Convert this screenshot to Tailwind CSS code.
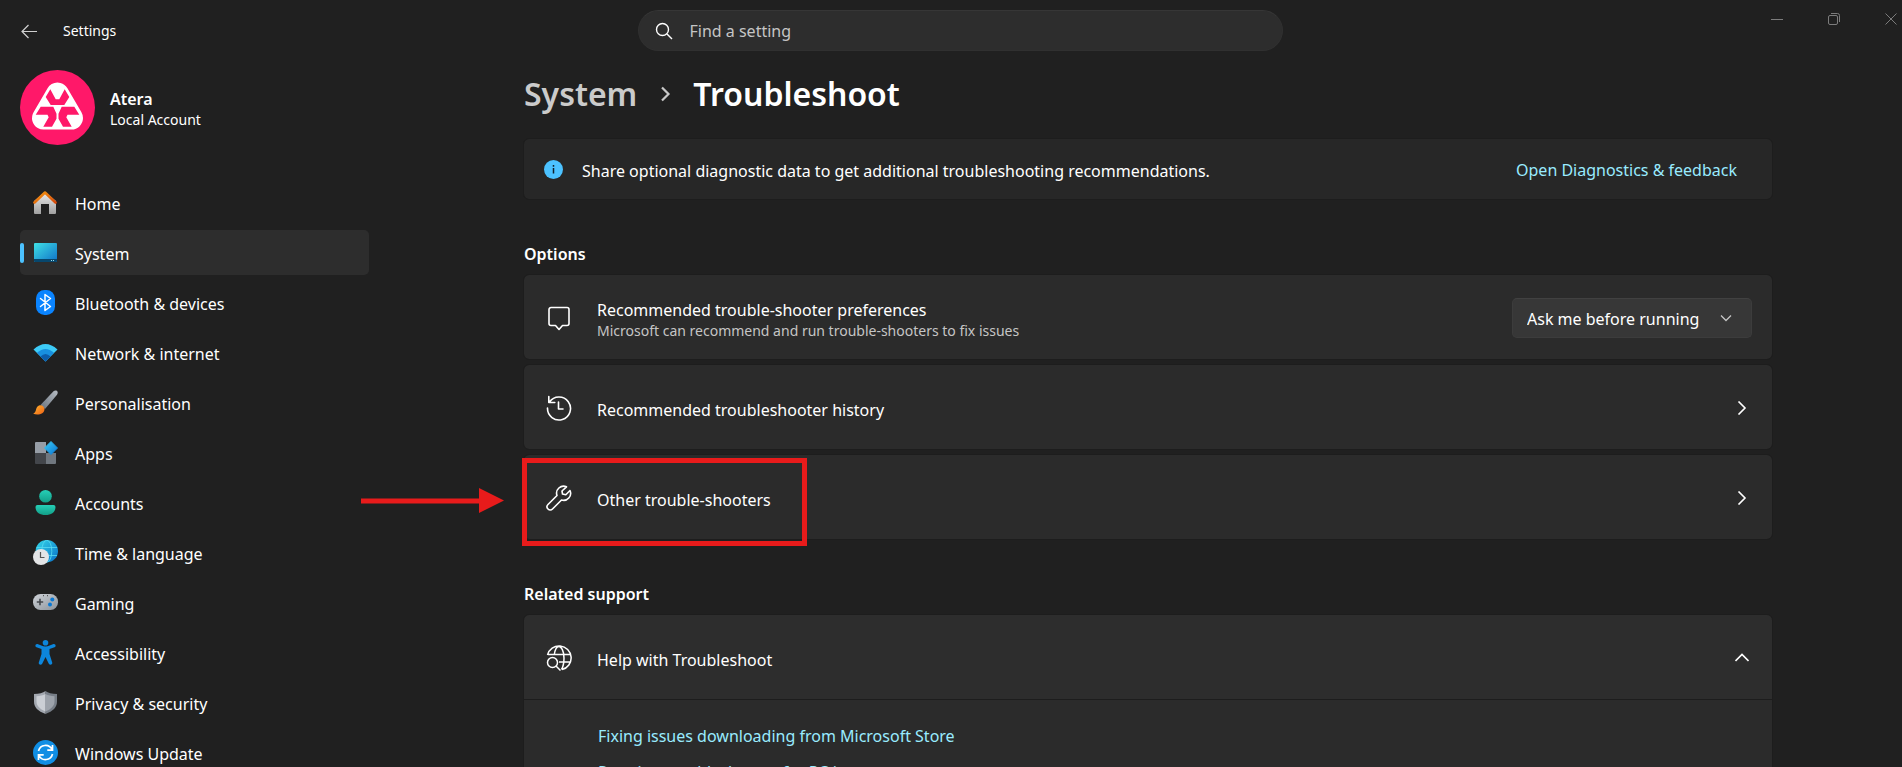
<!DOCTYPE html>
<html lang="en-GB">
<head>
<meta charset="utf-8">
<title>Settings</title>
<script src="https://cdn.jsdelivr.net/npm/@tailwindcss/browser@4"></script>
</head>
<body class="bg-[#202020] text-white font-['Noto_Sans',sans-serif] text-base leading-6">
<div class="h-screen overflow-hidden flex flex-col">

  <header class="h-15 shrink-0 flex items-start">
    <div class="flex-1 flex items-center h-15 gap-6 pl-[19px] pt-0.5">
      <button aria-label="Back" class="size-5">
        <svg viewBox="0 0 20 20" class="size-5" fill="none" stroke="#d0d0d0" stroke-width="1.2"><path d="M9.5 4 3 10.5 9.5 17M3 10.5h15"/></svg>
      </button>
      <h1 class="text-sm">Settings</h1>
    </div>
    <label class="mt-[10px] w-[645px] h-[41px] rounded-full bg-[#2d2d2d] border border-[#303030] border-t-[#363636] flex items-center gap-4 pl-[15px]">
      <svg viewBox="0 0 20 20" class="size-5" fill="none" stroke="#fff" stroke-width="1.4"><circle cx="8.5" cy="8.5" r="6"/><path d="m13 13 5 5"/></svg>
      <input type="text" aria-label="Find a setting" placeholder="Find a setting" class="flex-1 bg-transparent outline-none placeholder:text-[#c5c5c5]">
    </label>
    <div class="flex-1 flex justify-end items-center h-[38px] gap-[37px] pr-px">
      <button aria-label="Minimise" class="size-5"><svg viewBox="0 0 20 20" class="size-5" stroke="#7c7c7c" fill="none"><path d="M4 10.5h12"/></svg></button>
      <button aria-label="Restore" class="size-5"><svg viewBox="0 0 20 20" class="size-5" stroke="#7c7c7c" fill="none"><rect x="4.500" y="6.500" width="9" height="9" rx="1.500"/><path d="M7 4.500h6.500a2 2 0 0 1 2 2V13"/></svg></button>
      <button aria-label="Close" class="size-5"><svg viewBox="0 0 20 20" class="size-5" stroke="#7c7c7c" fill="none"><path d="m4.500 4.500 11 11m0-11-11 11"/></svg></button>
    </div>
  </header>

  <div class="flex-1 min-h-0 flex">
    <aside class="w-[394px] shrink-0 pl-5 pt-[10px]">
      <div class="flex items-center gap-[15px]">
        <svg viewBox="0 0 75 75" class="size-[75px]">
          <circle cx="37.500" cy="37.500" r="37.500" fill="#ff1869"/>
          <path d="M37.500 24 23.500 48h28Z" fill="#fff" stroke="#fff" stroke-width="23" stroke-linejoin="round"/>
          <g fill="#ff1869">
            <path d="m30.300 19.300 5.400 10h3.600l5.400-10 4.600 7.700-5 8H30.700l-5-8Z"/>
            <path d="M20.700 36.800h12.600l3.200 7v5l-4.500 8h-8.700l5.400-9.600-1.200-2.500H15.700Z"/>
            <path d="M54.300 36.800H41.700l-3.200 7v5l4.500 8h8.700l-5.400-9.600 1.200-2.500h11.800Z"/>
          </g>
        </svg>
        <div class="pt-0.5">
          <div class="font-semibold leading-[22px]">Atera</div>
          <div class="text-sm leading-5">Local Account</div>
        </div>
      </div>

      <nav class="mt-[35px] w-[349px] flex flex-col gap-[5px]">
        <a href="#" class="h-[45px] shrink-0 flex items-center gap-[17px] pl-[13px]">
          <svg viewBox="0 0 25 25" class="size-[25px]"><defs><linearGradient id="hw" x2="0" y2="1"><stop stop-color="#eee"/><stop offset="1" stop-color="#a0a0a0"/></linearGradient><linearGradient id="hr" x2="1" y2="1"><stop stop-color="#f59a12"/><stop offset="1" stop-color="#d64a0c"/></linearGradient></defs><path d="M1 11 12 2l11 9v12a1 1 0 0 1-1 1h-6V14H8v10H2a1 1 0 0 1-1-1Z" fill="url(#hw)"/><path d="M1.500 12.500 12 2.500l10.500 10" fill="none" stroke="url(#hr)" stroke-width="2.600" stroke-linecap="round" stroke-linejoin="round"/></svg>
          <span class="pt-0.5">Home</span></a>
        <a href="#" aria-current="page" class="relative h-[45px] shrink-0 flex items-center gap-[17px] pl-[13px] rounded-[5px] bg-[#2d2d2d]">
          <span class="absolute left-0 top-[13px] h-5 w-1 rounded-full bg-[#4cc2ff]"></span>
          <svg viewBox="0 0 25 25" class="size-[25px]"><defs><linearGradient id="sy" x2="1" y2="1"><stop stop-color="#3fe0e5"/><stop offset="1" stop-color="#0f71c8"/></linearGradient></defs><rect x="1" y="3" width="23" height="19" rx="1" fill="url(#sy)"/><path d="M1 19h23v2a1 1 0 0 1-1 1H2a1 1 0 0 1-1-1Z" fill="#07476d"/><path d="M18 20.500h1m1 0h1" stroke="#9de"/></svg>
          <span class="pt-0.5">System</span></a>
        <a href="#" class="h-[45px] shrink-0 flex items-center gap-[17px] pl-[13px]">
          <svg viewBox="0 0 25 25" class="size-[25px]"><rect x="3" width="19" height="25" rx="8.500" fill="#0a84ff"/><path d="m7.500 8.500 10 8-5.500 4v-16l5.500 4-10 8" fill="none" stroke="#fff" stroke-width="1.500" stroke-linejoin="round" stroke-linecap="round"/></svg>
          <span class="pt-0.5">Bluetooth &amp; devices</span></a>
        <a href="#" class="h-[45px] shrink-0 flex items-center gap-[17px] pl-[13px]">
          <svg viewBox="0 0 25 25" class="size-[25px]"><path d="M.5 9.500Q12.500-1.500 24.500 9.500L12.500 21.500Z" fill="#3dcbf7"/><path d="M4 12.800Q12.500 5 21 12.800L12.500 21.500Z" fill="#188fe0"/><path d="M7.500 16.500Q12.500 11.500 17.500 16.500L12.500 21.500Z" fill="#0c5cab"/></svg>
          <span class="pt-0.5">Network &amp; internet</span></a>
        <a href="#" class="h-[45px] shrink-0 flex items-center gap-[17px] pl-[13px]">
          <svg viewBox="0 0 25 25" class="size-[25px]"><defs><linearGradient id="pb" x1="1" x2="0" y2="1"><stop stop-color="#b6bcc3"/><stop offset="1" stop-color="#69737e"/></linearGradient><linearGradient id="po" x2="1" y2="1"><stop stop-color="#ffb52d"/><stop offset="1" stop-color="#ed6117"/></linearGradient></defs><path d="M7.500 15 20.500 1.200Q22-.2 24 .8 25.400 2.500 24 4.800L12 19Z" fill="url(#pb)"/><path d="M4.500 16.500C7.500 13.500 11.500 16 11.500 19c0 5.500-7 6.500-11.300 4.800C3.800 22 2.200 19 4.500 16.500Z" fill="url(#po)"/></svg>
          <span class="pt-0.5">Personalisation</span></a>
        <a href="#" class="h-[45px] shrink-0 flex items-center gap-[17px] pl-[13px]">
          <svg viewBox="0 0 25 25" class="size-[25px]"><defs><linearGradient id="ab" x2="1" y2="1"><stop stop-color="#3ccbf4"/><stop offset="1" stop-color="#0875d4"/></linearGradient></defs><path d="M3 2h10v11H2V3a1 1 0 0 1 1-1Z" fill="#969da6"/><path d="M2 13h11v11H3a1 1 0 0 1-1-1Z" fill="#43464b"/><path d="M13 13h10v10a1 1 0 0 1-1 1h-9Z" fill="#70777f"/><path d="m18 1.500 6.500 6.500-6.500 6.500L11.500 8Z" fill="url(#ab)" stroke="url(#ab)" stroke-linejoin="round"/></svg>
          <span class="pt-0.5">Apps</span></a>
        <a href="#" class="h-[45px] shrink-0 flex items-center gap-[17px] pl-[13px]">
          <svg viewBox="0 0 25 25" class="size-[25px]"><defs><linearGradient id="ac" x2="0" y2="1"><stop stop-color="#26cfb7"/><stop offset="1" stop-color="#129e87"/></linearGradient></defs><circle cx="12.500" cy="6.300" r="6.300" fill="url(#ac)"/><path d="M4.500 15h16a2 2 0 0 1 2 2c0 5-4 8-10 8s-10-3-10-8a2 2 0 0 1 2-2Z" fill="url(#ac)"/></svg>
          <span class="pt-0.5">Accounts</span></a>
        <a href="#" class="h-[45px] shrink-0 flex items-center gap-[17px] pl-[13px]">
          <svg viewBox="0 0 25 25" class="size-[25px]"><defs><linearGradient id="tl" x2="1" y2="1"><stop stop-color="#35d7e8"/><stop offset="1" stop-color="#0871c9"/></linearGradient></defs><circle cx="13.800" cy="11.200" r="11.200" fill="url(#tl)"/><g fill="none" stroke="#58dcf2" stroke-width=".8"><ellipse cx="13.800" cy="11.200" rx="5" ry="11"/><path d="M3.500 7.500h20.700M3 15.500h21"/></g><circle cx="8" cy="17" r="8" fill="#e3e4e6"/><path d="M7.500 12v5.500h4" fill="none" stroke="#555" stroke-width="1.200"/></svg>
          <span class="pt-0.5">Time &amp; language</span></a>
        <a href="#" class="h-[45px] shrink-0 flex items-center gap-[17px] pl-[13px]">
          <svg viewBox="0 0 25 25" class="size-[25px]"><defs><linearGradient id="gm" x2="1" y2="1"><stop stop-color="#cfd3d8"/><stop offset="1" stop-color="#8b929a"/></linearGradient></defs><rect y="4" width="25" height="16" rx="7.500" fill="url(#gm)"/><path d="M7 8.800v6.400M3.800 12h6.400" stroke="#44484d" stroke-width="1.600"/><circle cx="19.300" cy="9.500" r="2" fill="#0878d4"/><circle cx="17" cy="14.500" r="2" fill="#0878d4"/><path d="M10 5.700h1m3 0h1" stroke="#555" stroke-width="1.200"/></svg>
          <span class="pt-0.5">Gaming</span></a>
        <a href="#" class="h-[45px] shrink-0 flex items-center gap-[17px] pl-[13px]">
          <svg viewBox="0 0 25 25" class="size-[25px]"><g fill="#0c86dc"><circle cx="12.500" cy="2.800" r="2.800"/><path d="M4.500 4c2.500.8 5 2.400 8 2.400s5.500-1.600 8-2.400c2-.5 3 2.400 1 3.200L16.500 9v5l2.700 8.500c.6 2.200-2.400 3.200-3.400 1.200L12.500 17l-3.300 6.700c-1 2-4 1-3.400-1.200L8.500 14V9l-5-1.800C1.500 6.400 2.500 3.500 4.500 4Z"/></g></svg>
          <span class="pt-0.5">Accessibility</span></a>
        <a href="#" class="h-[45px] shrink-0 flex items-center gap-[17px] pl-[13px]">
          <svg viewBox="0 0 25 25" class="size-[25px]"><path d="M12.500 1C15 3 19 3.800 24 4v7.500c0 6-4 9.500-11.500 12.500Z" fill="#777e87"/><path d="M12.500 1C10 3 6 3.800 1 4v7.500c0 6 4 9.500 11.500 12.500Z" fill="#a3a8b0"/><path d="M12.500 4C10 5.500 7 6 3.500 6.300v5c0 4.700 3 7.500 9 10.200Z" fill="#cbcfd5"/><path d="M12.500 4c2.500 1.500 5.500 2 9 2.300v5c0 4.700-3 7.500-9 10.200Z" fill="#9da3ab"/></svg>
          <span class="pt-0.5">Privacy &amp; security</span></a>
        <a href="#" class="h-[45px] shrink-0 flex items-center gap-[17px] pl-[13px]">
          <svg viewBox="0 0 25 25" class="size-[25px]"><circle cx="12.500" cy="12.500" r="12.500" fill="#108ee4"/><g fill="none" stroke="#fff" stroke-width="1.700"><path d="M5.500 11A7.200 7.200 0 0 1 19 9.500M19.500 5v5.200h-5.200M19.500 14A7.200 7.200 0 0 1 6 15.500M5.500 20v-5.200h5.200"/></g></svg>
          <span class="pt-0.5">Windows Update</span></a>
      </nav>
    </aside>

    <main class="flex-1 min-w-0 pr-[130px] pl-[130px] pt-3">
      <h2 class="flex items-center text-[32px] leading-[44px] font-semibold">
        <a href="#" class="text-[#cbcbcb]">System</a>
        <svg viewBox="0 0 20 20" class="size-5 mx-[18px]" fill="none" stroke="#c8c8c8" stroke-width="2.200"><path d="m7 3.500 6.500 6.500L7 16.500"/></svg>
        <span>Troubleshoot</span>
      </h2>

      <section class="mt-[23px] h-[60px] flex items-center rounded-[5px] bg-[#272727] outline outline-[#1d1d1d] pl-5 pr-[35px]">
        <svg viewBox="0 0 19 19" class="size-[19px] mr-[19px]"><circle cx="9.500" cy="9.500" r="9.500" fill="#4cc2ff"/><path d="M9.500 5v1.800M9.500 8v5.500" stroke="#10202a" stroke-width="1.500"/></svg>
        <p class="pt-[3px]">Share optional diagnostic data to get additional troubleshooting recommendations.</p>
        <a href="#" class="ml-auto pt-px text-[#99ebff]">Open Diagnostics &amp; feedback</a>
      </section>

      <h3 class="mt-[43px] font-semibold">Options</h3>
      <div class="mt-[9px] flex flex-col gap-[6px]">
        <div class="h-[84px] flex items-center rounded-[5px] bg-[#2b2b2b] outline outline-[#1d1d1d] pt-0.5 pl-[22px] pr-5">
          <svg viewBox="0 0 26 26" class="size-[26px] mr-[25px]" fill="none" stroke="#fff" stroke-width="1.600" stroke-linejoin="round"><path d="M5 2.500h16a2 2 0 0 1 2 2v14a2 2 0 0 1-2 2h-4.500L13 24.500l-3.500-4H5a2 2 0 0 1-2-2v-14a2 2 0 0 1 2-2Z"/></svg>
          <div class="pt-1">
            <div id="pref" class="leading-[22px]">Recommended trouble-shooter preferences</div>
            <div class="text-sm leading-5 text-[#c5c5c5]">Microsoft can recommend and run trouble-shooters to fix issues</div>
          </div>
          <div class="relative ml-auto">
            <select aria-labelledby="pref" class="appearance-none w-60 h-10 rounded-[5px] bg-[#373737] border border-[#3c3c3c] border-t-[#414141] pt-0.5 pl-[14px]"><option>Ask me before running</option></select>
            <svg viewBox="0 0 12 12" class="absolute right-5 top-[14px] size-3 pointer-events-none" fill="none" stroke="#c5c5c5" stroke-width="1.300"><path d="m1 3.500 5 5 5-5"/></svg>
          </div>
        </div>
        <a href="#" class="h-[84px] flex items-center rounded-[5px] bg-[#2b2b2b] outline outline-[#1d1d1d] pt-0.5 pl-[22px] pr-[23px]">
          <svg viewBox="0 0 26 26" class="size-[26px] mr-[25px]" fill="none" stroke="#fff" stroke-width="1.600" stroke-linecap="round" stroke-linejoin="round"><path d="M3.500 7A11.500 11.500 0 1 1 1.500 13M2.800 1.500v6h6M12.500 7v7h4.500"/></svg>
          <span class="pt-1">Recommended troubleshooter history</span>
          <svg viewBox="0 0 14 14" class="size-[14px] ml-auto" fill="none" stroke="#fff" stroke-width="1.600"><path d="m3.500.5 6.500 6.500-6.500 6.500"/></svg>
        </a>
        <a href="#" class="relative h-[84px] flex items-center rounded-[5px] bg-[#2b2b2b] outline outline-[#1d1d1d] pt-0.5 pl-[22px] pr-[23px]">
          <svg viewBox="0 0 26 26" class="size-[26px] mr-[25px]" fill="none" stroke="#fff" stroke-width="1.600" stroke-linejoin="round"><path d="M20.500 1.800A7 7 0 0 0 11 10.500L2 19.500a3 3 0 0 0 4.500 4.500l9-9A7 7 0 0 0 24 5.500l-4.200 4.300-3.300-.8-.5-3Z"/></svg>
          <span class="pt-1">Other trouble-shooters</span>
          <svg viewBox="0 0 14 14" class="size-[14px] ml-auto" fill="none" stroke="#fff" stroke-width="1.600"><path d="m3.500.5 6.500 6.500-6.500 6.500"/></svg>
          <span class="absolute -left-[2px] top-[3px] w-[285px] h-[88px] border-5 border-[#e81b1b] pointer-events-none"></span>
          <svg viewBox="0 0 144 26" class="absolute -left-[163px] top-[33px] w-36 h-[26px] pointer-events-none"><path d="M0 13h120" stroke="#e81b1b" stroke-width="5"/><path d="m118 0 25 12.500L118 25Z" fill="#e81b1b"/></svg>
        </a>
      </div>

      <h3 class="mt-[43px] font-semibold">Related support</h3>
      <div class="mt-[9px] rounded-t-[5px] bg-[#2b2b2b] outline outline-[#1d1d1d]">
        <button aria-expanded="true" class="w-full h-[85px] flex items-center rounded-t-[5px] bg-[#2d2d2d] border-b border-[#1d1d1d] pt-0.5 pl-[22px] pr-[23px]">
          <svg viewBox="0 0 26 26" class="size-[26px] mr-[25px]" fill="none" stroke="#fff" stroke-width="1.500"><path d="M1.500 10a12 12 0 1 1 14.500 14.600M2 9.500h22M13 17h11M8.200 10C9 4.500 11 1.500 13 1.500s5 4 5 11.500c0 5-1 9-2.500 11.500"/><circle cx="6.500" cy="17.500" r="5"/><path d="m10 21 4.500 4.500"/></svg>
          <span class="pt-1">Help with Troubleshoot</span>
          <svg viewBox="0 0 14 14" class="size-[14px] ml-auto" fill="none" stroke="#fff" stroke-width="1.600"><path d="M.5 10 7 3.500l6.500 6.500"/></svg>
        </button>
        <div class="flex flex-col items-start gap-3 pl-[74px] pt-6 pb-6 text-[#99ebff]">
          <a href="#">Fixing issues downloading from Microsoft Store</a>
          <a href="#">Running troubleshooter for PC issues</a>
        </div>
      </div>
    </main>
  </div>
</div>
</body>
</html>
